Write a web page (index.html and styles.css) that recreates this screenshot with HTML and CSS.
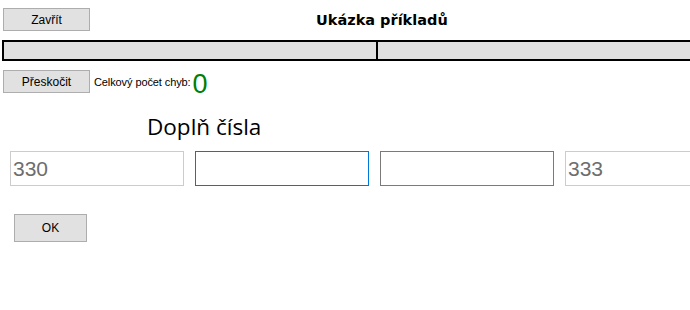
FILE: index.html
```html
<!DOCTYPE html>
<html lang="cs">
<head>
<meta charset="utf-8">
<title>Ukázka příkladů</title>
<link rel="stylesheet" href="styles.css">
</head>
<body>
<div class="page">
  <div class="top">
    <button class="btn btn-close">Zavřít</button>
    <h1 class="title">Ukázka příkladů</h1>
  </div>
  <div class="progress">
    <div class="seg seg-first"></div>
    <div class="seg"></div>
  </div>
  <div class="status">
    <button class="btn">Přeskočit</button>
    <span class="label">Celkový počet chyb:</span><span class="count">0</span>
  </div>
  <h2 class="heading">Doplň čísla</h2>
  <div class="fields">
    <input class="field field-given" type="text" value="330" disabled>
    <input class="field field-focus" type="text">
    <input class="field field-empty" type="text">
    <input class="field field-given" type="text" value="333" disabled>
  </div>
  <button class="btn btn-ok">OK</button>
</div>
</body>
</html>
```
FILE: styles.css
```css
html, body {
  margin: 0;
  padding: 0;
  background: #ffffff;
  overflow: hidden;
  width: 690px;
  height: 310px;
}
.page {
  width: 760px;
  font-family: "Liberation Sans", Arial, sans-serif;
  color: #000;
}
.btn {
  box-sizing: border-box;
  width: 87px;
  height: 23px;
  background: #e1e1e1;
  border: 1px solid #adadad;
  border-radius: 0;
  font-family: "Liberation Sans", Arial, sans-serif;
  font-size: 12px;
  color: #000;
  padding: 0;
  margin: 0;
}
.top {
  height: 40px;
  display: flex;
  align-items: flex-start;
}
.btn-close {
  margin: 8px 0 0 3px;
}
.title {
  margin: 10px 0 0 226px;
  font-family: "DejaVu Sans", Verdana, sans-serif;
  font-weight: bold;
  font-size: 14.5px;
  line-height: 20px;
  color: #000;
}
.progress {
  margin-left: 2px;
  height: 21px;
  box-sizing: border-box;
  border: 2px solid #000;
  display: flex;
  background: #e0e0e0;
}
.seg {
  flex: 1;
}
.seg-first {
  flex: none;
  width: 372px;
  border-right: 2px solid #000;
}
.status {
  margin-top: 9px;
  display: flex;
  align-items: center;
  height: 23px;
}
.status .btn {
  margin-left: 3px;
}
.label {
  margin-left: 4px;
  font-size: 11px;
  letter-spacing: -0.1px;
}
.count {
  margin-left: 2px;
  margin-top: 4px;
  font-size: 27px;
  line-height: 20px;
  color: #008000;
}
.heading {
  margin: 20px 0 0 147px;
  font-family: "Open Sans", "Noto Sans", sans-serif;
  font-weight: normal;
  font-size: 22.5px;
  line-height: 28px;
  height: 38px;
}
.fields {
  display: flex;
  gap: 11px;
  margin-left: 10px;
}
.field {
  box-sizing: border-box;
  flex: none;
  width: 174px;
  height: 35px;
  margin: 0;
  padding: 0 0 0 2px;
  font-family: "Liberation Sans", Arial, sans-serif;
  font-size: 21px;
  color: #6d6d6d;
  background: #fff;
  border: 1px solid #7a7a7a;
  border-radius: 0;
  outline: none;
}
.field-given {
  border-color: #cccccc;
  color: #6d6d6d;
  -webkit-text-fill-color: #6d6d6d;
  opacity: 1;
}
.field-focus {
  border-color: #0078d7;
}
.btn-ok {
  width: 73px;
  height: 28px;
  margin: 28px 0 0 14px;
}
```
